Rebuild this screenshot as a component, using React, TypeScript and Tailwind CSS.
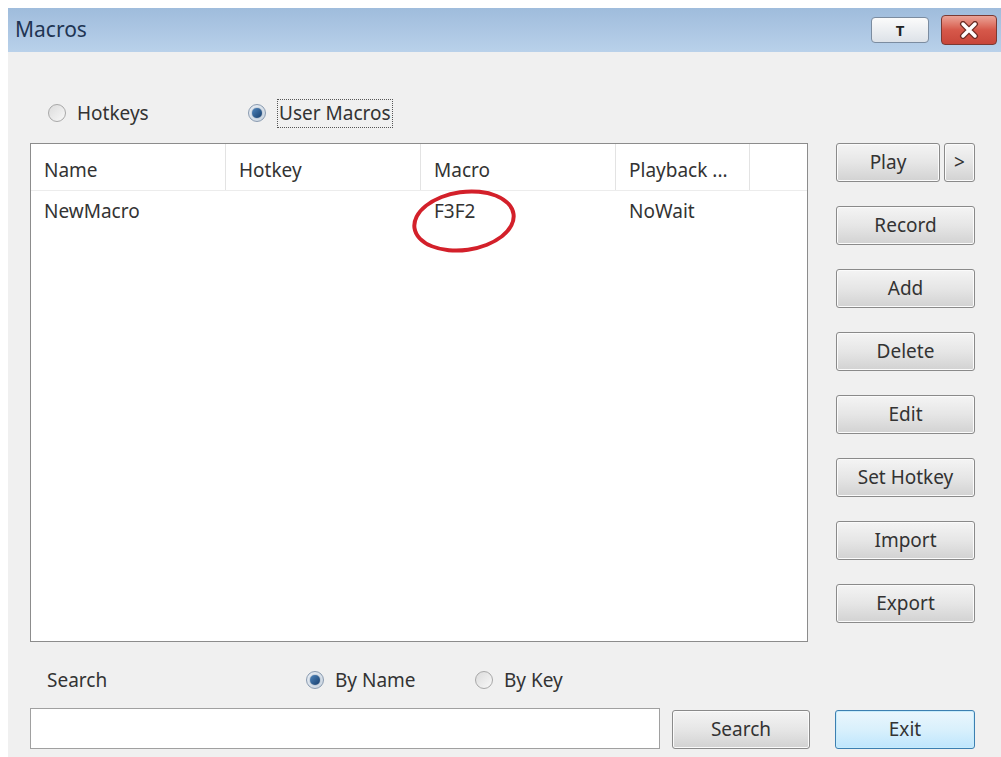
import React from "react";

const font = { fontFamily: '"Noto Sans", "Open Sans", sans-serif' };

function Radio({ checked, label, focus }: { checked?: boolean; label: string; focus?: boolean }) {
  return (
    <div className="flex items-center gap-[11px]">
      <span
        className={
          "flex h-[18px] w-[18px] items-center justify-center rounded-full border " +
          (checked
            ? "border-[#8a9bb0] bg-gradient-to-br from-[#e8eef5] to-[#c9d4e0]"
            : "border-[#a8a8a8] bg-gradient-to-br from-[#dcdcdc] to-[#f8f8f8]")
        }
      >
        {checked && (
          <span className="h-[10px] w-[10px] rounded-full bg-gradient-to-br from-[#4f86bd] to-[#173f6e] shadow-[0_0_1px_#0b2c52]" />
        )}
      </span>
      <span
        className={
          "text-[19px] leading-none text-[#333] " +
          (focus ? "border border-dotted border-[#555] px-[1px] py-[4px]" : "")
        }
      >
        {label}
      </span>
    </div>
  );
}

function Btn({ children, className = "", primary }: { children: React.ReactNode; className?: string; primary?: boolean }) {
  return (
    <button
      className={
        "flex h-[39px] items-center justify-center rounded-[3px] border text-[19px] text-[#333] " +
        (primary
          ? "border-[#3c7fb1] bg-gradient-to-b from-[#eaf6fd] via-[#d9f0fc] to-[#bee6fd] shadow-[inset_0_0_0_1px_#c8ecfb]"
          : "border-[#8a8a8a] bg-gradient-to-b from-[#f4f4f4] via-[#e6e6e6] to-[#d2d2d2] shadow-[inset_0_0_0_1px_#fbfbfb]") +
        " " +
        className
      }
    >
      {children}
    </button>
  );
}

export default function App() {
  const cols = ["Name", "Hotkey", "Macro", "Playback ..."];
  return (
    <div className="h-[757px] w-[1001px] overflow-hidden bg-white pl-[8px] pt-[8px]" style={font}>
      <div className="flex h-[749px] flex-col bg-[#f0f0f0]">
        {/* title bar */}
        <div className="flex h-[44px] items-center justify-between bg-gradient-to-b from-[#9fbcdc] to-[#b9d1ea] pl-[7px] pr-[4px]">
          <span className="text-[21px] text-[#1f3553]">Macros</span>
          <div className="flex items-center gap-[12px]">
            <div className="flex h-[26px] w-[58px] items-center justify-center rounded-[4px] border border-[#7b8ca0] bg-gradient-to-b from-[#fbfbfb] to-[#dde2e8] text-[15px] font-bold text-[#222]">
              T
            </div>
            <div className="flex h-[30px] w-[56px] items-center justify-center rounded-[4px] border border-[#7a3a33] bg-gradient-to-b from-[#eaa397] via-[#d6584a] to-[#c8463a]">
              <svg width="22" height="18" viewBox="0 0 22 18">
                <path d="M5 3 L17 15 M17 3 L5 15" stroke="#6a2a22" strokeWidth="6" strokeLinecap="round" />
                <path d="M5 3 L17 15 M17 3 L5 15" stroke="#fff" strokeWidth="3.5" strokeLinecap="round" />
              </svg>
            </div>
          </div>
        </div>

        <div className="flex flex-col pl-[22px]">
          {/* mode radios */}
          <div className="mt-[45px] flex h-[32px] items-center">
            <div className="ml-[18px] w-[200px]">
              <Radio label="Hotkeys" />
            </div>
            <Radio label="User Macros" checked focus />
          </div>

          <div className="mt-[14px] flex">
            {/* macro list */}
            <div className="relative h-[499px] w-[778px] border border-[#8c8c8c] bg-white">
              <div className="flex h-[47px] border-b border-[#ececec]">
                {cols.map((c, i) => (
                  <div
                    key={c}
                    className={
                      "flex items-center border-r border-[#e3e3e3] pl-[13px] pt-[6px] text-[19px] text-[#333] " +
                      (i === 3 ? "w-[134px]" : "w-[195px]")
                    }
                  >
                    {c}
                  </div>
                ))}
              </div>
              <div className="flex h-[40px] items-center text-[19px] text-[#333]">
                <div className="w-[195px] pl-[13px]">NewMacro</div>
                <div className="w-[195px] pl-[13px]"></div>
                <div className="w-[195px] pl-[13px]">F3F2</div>
                <div className="w-[134px] pl-[13px]">NoWait</div>
              </div>
              <div className="absolute left-[381px] top-[46px] h-[62px] w-[104px] rotate-[-8deg] rounded-[50%] border-[4px] border-[#d3202a]" />
            </div>

            {/* action buttons */}
            <div className="ml-[28px] flex w-[139px] flex-col gap-[24px]">
              <div className="flex gap-[4px]">
                <Btn className="w-[104px]">Play</Btn>
                <Btn className="w-[31px]">&gt;</Btn>
              </div>
              <Btn>Record</Btn>
              <Btn>Add</Btn>
              <Btn>Delete</Btn>
              <Btn>Edit</Btn>
              <Btn>Set Hotkey</Btn>
              <Btn>Import</Btn>
              <Btn>Export</Btn>
            </div>
          </div>

          {/* search options */}
          <div className="mt-[24px] flex h-[28px] items-center">
            <span className="ml-[17px] w-[259px] text-[19px] text-[#333]">Search</span>
            <div className="w-[169px]">
              <Radio label="By Name" checked />
            </div>
            <Radio label="By Key" />
          </div>

          <div className="mt-[13px] flex items-center">
            <div className="h-[41px] w-[630px] border border-[#a0a0a0] bg-white" />
            <Btn className="ml-[12px] mt-[3px] w-[138px]">Search</Btn>
            <Btn primary className="ml-[25px] mt-[3px] w-[140px]">Exit</Btn>
          </div>
        </div>
      </div>
    </div>
  );
}
